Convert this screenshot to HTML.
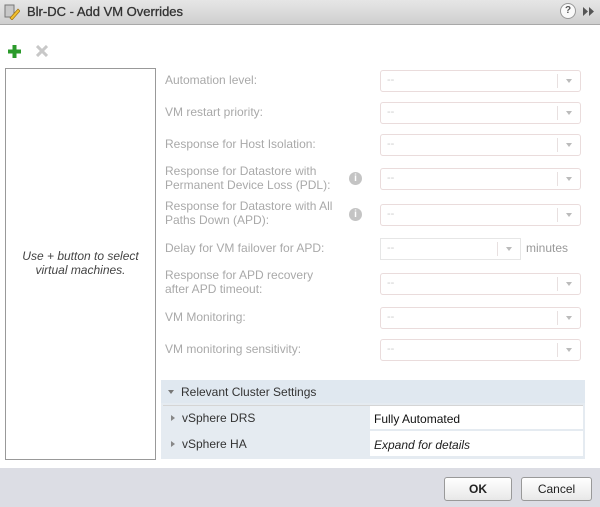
<!DOCTYPE html>
<html><head><style>
body{margin:0;width:600px;height:507px;position:relative;overflow:hidden;font-family:"Liberation Sans",sans-serif;font-size:12px;background:#fff}
.a{position:absolute}
.lbl{position:absolute;left:165px;color:#a9a9a9;font-size:12px;line-height:14px}
.dd{position:absolute;left:380px;width:199px;height:20px;border:1px solid #eadcdc;border-radius:3px;background:#fff}
.dd span{position:absolute;left:6px;top:3px;color:#ccc;font-size:11px}
.dd i{position:absolute;right:0;top:3px;width:22px;height:14px;border-left:1px solid #e8e0e0}
.dd i:after{content:"";position:absolute;left:8px;top:5px;border:3px solid transparent;border-top:4px solid #bbb}
.inf{position:absolute;left:349px;width:13px;height:13px;border-radius:50%;background:#c4c4c4;color:#fff;font-size:10px;font-weight:bold;text-align:center;line-height:13px}
.btn{position:absolute;top:477px;height:22px;border:1px solid #999;border-radius:3px;background:linear-gradient(#fff,#e8e8e8);text-align:center;line-height:22px;font-size:13px;color:#222}
.tr{position:absolute;width:0;height:0;border-top:3px solid transparent;border-bottom:3px solid transparent;border-left:4px solid #888}
</style></head><body>
<div class="a" style="left:0;top:0;width:600px;height:24px;background:linear-gradient(#e6e6e6,#cfcfcf);border-bottom:1px solid #a8a8a8"></div>
<svg class="a" style="left:4px;top:4px" width="16" height="16"><rect x="1" y="1" width="9" height="12" fill="#c8c8c8" stroke="#777"/><path d="M6 14 L14 5 L16 7 L8 16 Z" fill="#f0c030" stroke="#a07010" stroke-width=".7"/></svg>
<div class="a" style="left:27px;top:4px;font-size:13px;color:#333;-webkit-text-stroke:0.3px #333">Blr-DC - Add VM Overrides</div>
<div class="a" style="left:560px;top:3px;width:14px;height:14px;border-radius:50%;border:1px solid #999;background:#fafafa;font-size:10px;font-weight:bold;text-align:center;line-height:14px;color:#555">?</div>
<svg class="a" style="left:583px;top:7px" width="12" height="9"><path d="M0 0 L5 4.5 L0 9Z M6 0 L11 4.5 L6 9Z" fill="#555"/></svg>
<svg class="a" style="left:8px;top:45px" width="13" height="13"><path d="M4.5 0h4v4.5h4.5v4h-4.5v4.5h-4v-4.5h-4.5v-4h4.5z" fill="#2b9a2b"/></svg>
<svg class="a" style="left:36px;top:45px" width="12" height="12"><path d="M1 1L11 11M11 1L1 11" stroke="#c8c8c8" stroke-width="3"/></svg>
<div class="a" style="left:5px;top:68px;width:149px;height:390px;border:1px solid #999"></div>
<div class="a" style="left:5px;top:249px;width:151px;text-align:center;font-style:italic;color:#444;line-height:14px">Use + button to select virtual machines.</div>
<div class="lbl" style="top:73px">Automation level:</div>
<div class="lbl" style="top:105px">VM restart priority:</div>
<div class="lbl" style="top:137px">Response for Host Isolation:</div>
<div class="lbl" style="top:164px">Response for Datastore with<br>Permanent Device Loss (PDL):</div>
<div class="lbl" style="top:199px">Response for Datastore with All<br>Paths Down (APD):</div>
<div class="lbl" style="top:241px">Delay for VM failover for APD:</div>
<div class="lbl" style="top:268px">Response for APD recovery<br>after APD timeout:</div>
<div class="lbl" style="top:310px">VM Monitoring:</div>
<div class="lbl" style="top:342px">VM monitoring sensitivity:</div>
<div class="inf" style="top:172px">i</div>
<div class="inf" style="top:208px">i</div>
<div class="dd" style="top:70px"><span>--</span><i></i></div>
<div class="dd" style="top:102px"><span>--</span><i></i></div>
<div class="dd" style="top:134px"><span>--</span><i></i></div>
<div class="dd" style="top:168px"><span>--</span><i></i></div>
<div class="dd" style="top:204px"><span>--</span><i></i></div>
<div class="dd" style="top:238px;width:139px;border-color:#e6e6e6;border-radius:0"><span>--</span><i></i></div>
<div class="a" style="left:526px;top:241px;color:#999">minutes</div>
<div class="dd" style="top:273px"><span>--</span><i></i></div>
<div class="dd" style="top:307px"><span>--</span><i></i></div>
<div class="dd" style="top:339px"><span>--</span><i></i></div>
<div class="a" style="left:161px;top:380px;width:424px;height:79px;background:#e5ebf1"></div>
<div class="a" style="left:161px;top:380px;width:424px;height:23px;background:#e0e8f0"></div>
<div class="a" style="left:168px;top:390px;width:0;height:0;border-left:3px solid transparent;border-right:3px solid transparent;border-top:4px solid #777"></div>
<div class="a" style="left:181px;top:385px;color:#333">Relevant Cluster Settings</div>
<div class="a" style="left:163px;top:405px;width:420px;height:1px;background:#d5d5d5"></div>
<div class="a" style="left:370px;top:406px;width:213px;height:23px;background:#fff"></div>
<div class="a" style="left:370px;top:431px;width:213px;height:25px;background:#fff"></div>
<div class="tr" style="left:171px;top:415px"></div>
<div class="a" style="left:182px;top:411px;color:#333">vSphere DRS</div>
<div class="a" style="left:374px;top:412px;color:#111">Fully Automated</div>
<div class="tr" style="left:171px;top:441px"></div>
<div class="a" style="left:182px;top:437px;color:#333">vSphere HA</div>
<div class="a" style="left:374px;top:438px;color:#222;font-style:italic">Expand for details</div>
<div class="a" style="left:0;top:468px;width:600px;height:39px;background:#dcdde4"></div>
<div class="btn" style="left:444px;width:66px;font-weight:bold;font-size:12px">OK</div>
<div class="btn" style="left:521px;width:69px;font-size:12px">Cancel</div>
</body></html>
